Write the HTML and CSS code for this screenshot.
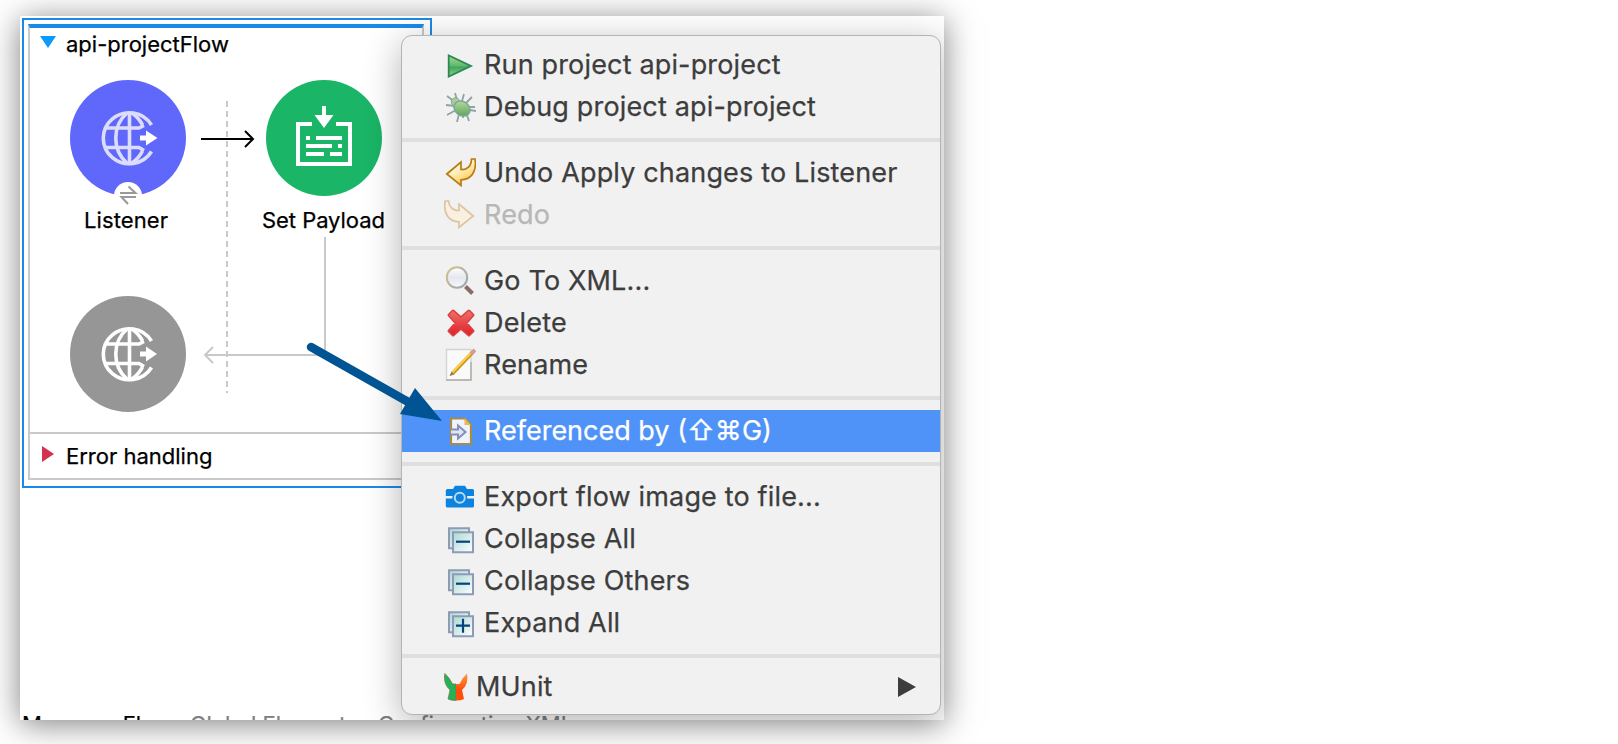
FILE: index.html
```html
<!DOCTYPE html>
<html lang="en">
<head>
<meta charset="utf-8">
<title>api-project</title>
<link rel="stylesheet" href="styles.css">
</head>
<body>
<main class="window">
  <section class="flow">
    <div class="flow-box">
      <header class="flow-head">
        <svg class="disclosure" width="16" height="12" viewBox="0 0 16 12"><path d="M0 0H16L8 12Z" fill="#0a9bff"/></svg>
        <span class="t-flow">api-projectFlow</span>
      </header>
      <footer class="flow-foot">
        <svg class="disclosure" width="16" height="16" viewBox="0 0 16 16"><path d="M2 0V16L14 8Z" fill="#d4314f"/></svg>
        <span class="t-error">Error handling</span>
      </footer>
    </div>
  </section>
  <svg class="diagram" width="420" height="480" viewBox="20 16 420 480" fill="none">
    <defs>
      <g id="globe">
        <path d="M151.500 125A26 25.500 0 1 0 151.500 151.500"/>
        <path d="M129.500 112V164M106 128H139L144 125.500M106 147.500H139L144 150.500"/>
        <path d="M127 113C112 126 112 150 127 163M132 113Q139 118 142.500 125M132 163Q139 158 142.500 151"/>
      </g>
    </defs>
    <path d="M227 101V393" stroke="#c9c9c9" stroke-width="2" stroke-dasharray="6 4"/>
    <path d="M325 237V355H205M213 347L205 355L213 363" stroke="#c9c9c9" stroke-width="2"/>
    <path d="M201 139H253M245 131L253 139L245 147" stroke="#000" stroke-width="2"/>
    <circle cx="128" cy="138" r="58" fill="#6067fb"/>
    <use href="#globe" stroke="#dcdcff" stroke-width="3.600"/>
    <path d="M140 135.500H146V130.500L157.500 138L146 145.500V140.500H140Z" fill="#fff"/>
    <circle cx="128" cy="196" r="14" fill="#fff"/>
    <path d="M120 193H135.500L128.500 186.500M136 197H121.500L128 204" stroke="#999" stroke-width="2"/>
    <circle cx="324" cy="138" r="58" fill="#1ab567"/>
    <path d="M312 124H298V164H350V124H336" stroke="#fff" stroke-width="4"/>
    <path d="M322 106H326V115H333.500L324 128L314.500 115H322Z" fill="#fff"/>
    <path d="M306 138H310M316 138H342M306 146H332M338 146H342M306 154H324M330 154H342" stroke="#fff" stroke-width="4"/>
    <circle cx="128" cy="354" r="58" fill="#969696"/>
    <g transform="translate(0 216)">
      <use href="#globe" stroke="#fff" stroke-width="3.600"/>
      <path d="M140 135.500H146V130.500L157 138L146 145.500V140.500H140Z" fill="#fff"/>
    </g>
  </svg>
  <span class="node-label t-listener">Listener</span>
  <span class="node-label t-payload">Set Payload</span>
  <nav class="tabs"><span class="tab tab-on">Message Flow</span><span class="tab">Global Elements</span><span class="tab">Configuration XML</span></nav>

  <div class="menu">
    <div class="item"><svg class="icon" viewBox="0 0 32 42"><defs><linearGradient id="g1" x2="0" y2="1"><stop stop-color="#a9d98c"/><stop offset=".5" stop-color="#5fb76c"/><stop offset=".55" stop-color="#3fa45f"/><stop offset="1" stop-color="#9ccf85"/></linearGradient></defs><path d="M4.700 11.500V32.500L27 22Z" fill="url(#g1)" stroke="#2a8a57" stroke-width="1.800"/></svg><span class="t-run">Run project api-project</span></div>
    <div class="item"><svg class="icon" viewBox="0 0 32 42"><defs><linearGradient id="g2" x2="1" y2="1"><stop stop-color="#c5e5ad"/><stop offset="1" stop-color="#4d9a4c"/></linearGradient></defs><path d="M11 7L13 14M3 10L11 16M2 19L11 20M3 29L12 24M13 36L15 28M20 8L18 15M28 11L22 17M31 21H24M32 25L26 24M25 35L23 29M19 32V29" stroke="#8ba6a3" stroke-width="1.800" fill="none"/><circle cx="11.500" cy="16" r="4.200" fill="#a9d092" stroke="#7fa598"/><ellipse cx="18" cy="22.500" rx="8.500" ry="7" transform="rotate(38 18 22.500)" fill="url(#g2)" stroke="#7fa598" stroke-width="1.500"/></svg><span class="t-debug">Debug project api-project</span></div>
    <hr class="rule">
    <div class="item"><svg class="icon" viewBox="0 0 32 42"><defs><linearGradient id="g3" x2=".6" y2="1"><stop stop-color="#fff"/><stop offset=".5" stop-color="#fff0c0"/><stop offset="1" stop-color="#ffc63e"/></linearGradient></defs><path d="M2.800 22L17 10V17.500C23 18 27.500 14 27.500 7H31C33 20 27 27.500 17 27.800V33.500Z" fill="url(#g3)" stroke="#b87a13" stroke-width="1.700"/></svg><span class="t-undo">Undo Apply changes to Listener</span></div>
    <div class="item item-off"><svg class="icon" viewBox="0 0 32 42"><path d="M29.200 22L15 10V16.500C9 17 5 13 4.500 7H1.200C-1 20 5 27.500 15 27.800V33.500Z" fill="#faf0df" stroke="#dcc4a0" stroke-width="1.700"/></svg><span class="t-redo">Redo</span></div>
    <hr class="rule">
    <div class="item"><svg class="icon" viewBox="0 0 32 42"><defs><linearGradient id="g4" x2="0" y2="1"><stop stop-color="#fff"/><stop offset=".5" stop-color="#e5e7ef"/><stop offset="1" stop-color="#f8f8fc"/></linearGradient><linearGradient id="g4b" x2="1" y2="1"><stop stop-color="#d3c48b"/><stop offset="1" stop-color="#9aa4b0"/></linearGradient></defs><path d="M21.500 26.500L28.500 33.500" stroke="#8c6a66" stroke-width="4"/><circle cx="13" cy="17.500" r="10.200" fill="url(#g4)" stroke="url(#g4b)" stroke-width="2"/></svg><span class="t-goto">Go To XML...</span></div>
    <div class="item"><svg class="icon" viewBox="0 0 32 42"><defs><linearGradient id="g5" x2="0" y2="1"><stop stop-color="#ee6f66"/><stop offset="1" stop-color="#e0202b"/></linearGradient></defs><path d="M9 9L17 16L25 9L29 13L22 21L29 29L25 33L17 26L9 33L5 29L12 21L5 13Z" fill="url(#g5)" stroke="#dc4040" stroke-width="3" stroke-linejoin="round"/><path d="M9 9L17 16L25 9L29 13L22 21L29 29L25 33L17 26L9 33L5 29L12 21L5 13Z" fill="url(#g5)"/></svg><span class="t-delete">Delete</span></div>
    <div class="item"><svg class="icon" viewBox="0 0 32 42"><path d="M2.500 5.500H27V36H2.500Z" fill="#fafafa" stroke="#d4d4d0" stroke-width="1.400"/><path d="M2 36H27V18" stroke="#b0afa6" stroke-width="1.500" fill="none"/><path d="M9 29L28 9" stroke="#c99522" stroke-width="3.800"/><path d="M8.500 28.300L27.500 8.500" stroke="#ffcf3c" stroke-width="2"/><path d="M5.500 32L7.500 27.500L10.500 30.500Z" fill="#8d7560"/><path d="M27 10L31 6" stroke="#d49a91" stroke-width="4"/></svg><span class="t-rename">Rename</span></div>
    <hr class="rule">
    <div class="item item-hot"><svg class="icon" viewBox="0 0 32 42"><path d="M7 8.500H20.500L27 15V34H7Z" fill="#eef3fd" stroke="#a98b45" stroke-width="2.200"/><path d="M20.500 8V15H27Z" fill="#e9b94f"/><path d="M7 19.500H14V15.500L21.500 22L14 28.500V24.500H7" fill="#dfe6f5" stroke="#8390b3" stroke-width="2"/></svg><span class="t-ref">Referenced by (<span class="key-shift">⇧</span><span class="key-cmd">⌘</span>G)</span></div>
    <hr class="rule">
    <div class="item"><svg class="icon" viewBox="0 0 32 42"><path d="M3.500 13H9L11 9.700H21L23 13H28.500Q30 13 30 14.500V20H1.800V14.500Q1.800 13 3.500 13ZM1.800 22.500H30V30Q30 31.500 28.500 31.500H3.500Q1.800 31.500 1.800 30Z" fill="#0c83df"/><circle cx="15.800" cy="21.700" r="7.500" fill="#0c83df"/><circle cx="15.800" cy="21.700" r="5" fill="#0c83df" stroke="#b9d9f3" stroke-width="2"/></svg><span class="t-export">Export flow image to file...</span></div>
    <div class="item"><svg class="icon" viewBox="0 0 32 42"><defs><linearGradient id="g6" x2="1" y2="1"><stop stop-color="#a9d8d4"/><stop offset="1" stop-color="#fff"/></linearGradient><g id="stack" fill="url(#g6)" stroke="#8e9bb5" stroke-width="2"><path d="M5 10.300H25V30.300H5Z"/><path d="M9 14.300H29V34.300H9Z"/></g></defs><use href="#stack"/><path d="M12 23.700H26" stroke="#00457c" stroke-width="2.200"/></svg><span class="t-call">Collapse All</span></div>
    <div class="item"><svg class="icon" viewBox="0 0 32 42"><use href="#stack"/><path d="M12 23.700H26" stroke="#00457c" stroke-width="2.200"/></svg><span class="t-coth">Collapse Others</span></div>
    <div class="item"><svg class="icon" viewBox="0 0 32 42"><use href="#stack"/><path d="M12 23.700H26M19 16.700V30.700" stroke="#00457c" stroke-width="2.200"/></svg><span class="t-exp">Expand All</span></div>
    <hr class="rule">
    <div class="item item-munit"><svg class="icon" viewBox="0 0 32 42"><defs><linearGradient id="g7" x2="0" y2="1"><stop stop-color="#ff9c3e"/><stop offset=".6" stop-color="#ff4d0a"/></linearGradient></defs><path d="M.8 7.500Q6 12 8.500 18H12V34.500Q7 34.500 4 33L6 24Q-1 18 .8 7.500Z" fill="#22b356" stroke="#7a7448" stroke-width=".7"/><path d="M23 7.500Q18 12 15.500 18H12V34.500Q17 34.500 20 33L18 24Q25 18 23 7.500Z" fill="url(#g7)"/></svg><span class="t-munit">MUnit</span><svg class="submenu" width="18" height="20" viewBox="0 0 18 20"><path d="M0 0V20L18 10Z" fill="#3d3d3d"/></svg></div>
  </div>
</main>
<svg class="pointer" width="160" height="100" viewBox="300 335 160 100"><path d="M311 347L410 403" stroke="#005493" stroke-width="8.500" stroke-linecap="round"/><path d="M415 388L442 421L400 414Z" fill="#005493"/></svg>
</body>
</html>
```
FILE: styles.css
```css
* { box-sizing: border-box; }
body {
  margin: 0;
  padding: 16px 0 0 20px;
  width: 1618px;
  height: 744px;
  overflow: hidden;
  background: #fff;
  color: #000;
  font: 22px/28px Inter, "Liberation Sans", sans-serif;
  position: relative;
}
.window {
  position: relative;
  width: 924px;
  height: 704px;
  background: #fff;
  box-shadow: 0 4px 30px rgba(0, 0, 0, .5);
  clip-path: inset(-16px -60px -24px -20px);
  -webkit-text-stroke: .25px currentColor;
}
.window span { white-space: nowrap; }

.flow {
  position: absolute;
  left: 2px;
  top: 2px;
  width: 410px;
  height: 470px;
  padding: 4px 6px 6px 4px;
  border: 2px solid #1a8ae8;
}
.flow-box {
  display: flex;
  flex-direction: column;
  justify-content: space-between;
  height: 100%;
  border: 2px solid #c9c9c9;
  border-top: 4px solid #1a8ae8;
}
.flow-head, .flow-foot {
  display: flex;
  align-items: center;
  gap: 10px;
  height: 32px;
  padding-left: 10px;
}
.flow-head .disclosure { margin-top: -4px; }
.flow-foot {
  height: 46px;
  border-top: 2px solid #c9c9c9;
}
.flow-foot .disclosure { margin-top: -4px; }

.diagram { position: absolute; left: 0; top: 0; }
.node-label { position: absolute; top: 190px; }
.t-listener { left: 64px; letter-spacing: .1px; }
.t-payload { left: 242px; letter-spacing: -.05px; }

/* tab strip is cut off by the bottom edge of the window */
.tabs {
  position: absolute;
  left: 0;
  right: 0;
  bottom: 0;
  height: 6px;
  padding-left: 2px;
  overflow: hidden;
  display: flex;
  color: #808080;
}
.tab { margin-top: -4px; flex: none; width: 188px; }
.tab-on { width: 168px; color: #000; }

.menu {
  position: absolute;
  left: 381px;
  top: 19px;
  width: 540px;
  height: 680px;
  padding-top: 8px;
  background: #f1f1f1;
  border: 1px solid #b4b4b4;
  border-radius: 11px;
  box-shadow: 0 8px 36px rgba(0, 0, 0, .3);
  color: #3d3d3d;
  font-size: 27px;
  line-height: 42px;
  letter-spacing: .16px;
  clip-path: inset(-19px -3px -5px -60px);
}
.item {
  display: flex;
  align-items: center;
  gap: 8px;
  height: 42px;
  padding-left: 42px;
}
.item-off { color: #b7b7b7; }
.item-hot { background: #4f93f8; color: #fff; letter-spacing: 0; }
.item-munit { gap: 0; height: 38px; }
.icon { width: 32px; height: 42px; flex: none; }
.rule {
  height: 4px;
  margin: 10px 0;
  border: 0;
  background: #dfdfdf;
}
.submenu { margin: 0 24px 0 auto; }
.pointer { position: absolute; left: 300px; top: 335px; }
```
